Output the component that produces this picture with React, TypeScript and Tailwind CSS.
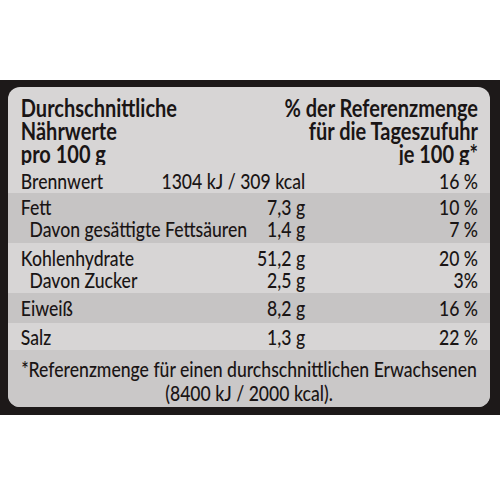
import React from "react";

type Line = { label: string; value: string; pct: string; indent?: boolean };
type Group = { lines: Line[]; bg: string; pad: string };

// Streifen abwechselnd hell / dunkel
const groups: Group[] = [
  {
    bg: "bg-[#d7d5d5]",
    pad: "pt-[5px] pb-[1px]",
    lines: [{ label: "Brennwert", value: "1304 kJ / 309 kcal", pct: "16 %" }],
  },
  {
    bg: "bg-[#c6c4c4]",
    pad: "pt-[3px] pb-[3px]",
    lines: [
      { label: "Fett", value: "7,3 g", pct: "10 %" },
      { label: "Davon gesättigte Fettsäuren", value: "1,4 g", pct: "7 %", indent: true },
    ],
  },
  {
    bg: "bg-[#d7d5d5]",
    pad: "pt-[4px] pb-[2px]",
    lines: [
      { label: "Kohlenhydrate", value: "51,2 g", pct: "20 %" },
      { label: "Davon Zucker", value: "2,5 g", pct: "3%", indent: true },
    ],
  },
  {
    bg: "bg-[#c6c4c4]",
    pad: "pt-[4px] pb-[4px]",
    lines: [{ label: "Eiweiß", value: "8,2 g", pct: "16 %" }],
  },
  {
    bg: "bg-[#d7d5d5]",
    pad: "pt-[3px] pb-[2px]",
    lines: [{ label: "Salz", value: "1,3 g", pct: "22 %" }],
  },
];

export default function App() {
  return (
    <div className="w-[500px] h-[500px] overflow-hidden bg-white text-[#1a1515] font-['Lato',sans-serif]">
      {/* dunkler Rahmen */}
      <div className="mt-[80px] h-[335px] bg-[#1d1919] pl-[8px] pr-[10px] pt-[7px] pb-[8px]">
        <div className="h-full rounded-[12px] bg-[#d7d5d5] overflow-hidden">
          {/* schmale Schrift: Inhalt horizontal gestaucht */}
          <div className="w-[602.5px] h-full flex flex-col origin-top-left scale-x-[0.8] whitespace-nowrap">
            {/* Kopfzeile */}
            <div className="flex justify-between pl-[16px] pr-[15px] pt-[9px] font-bold text-[25px] leading-[23px]">
              <div>
                <div>Durchschnittliche</div>
                <div>Nährwerte</div>
                <div>pro 100 g</div>
              </div>
              <div className="text-right">
                <div>% der Referenzmenge</div>
                <div>für die Tageszufuhr</div>
                <div>je 100 g*</div>
              </div>
            </div>

            {/* Nährwerte */}
            {groups.map((g, i) => (
              <div
                key={i}
                className={`${g.bg} ${g.pad} pl-[16px] pr-[15px] text-[22px] leading-[22px] font-medium`}
              >
                {g.lines.map((l) => (
                  <div key={l.label} className="flex">
                    <div className={l.indent ? "flex-1 pl-[11px]" : "flex-1"}>{l.label}</div>
                    <div className="text-right">{l.value}</div>
                    <div className="w-[216px] text-right">{l.pct}</div>
                  </div>
                ))}
              </div>
            ))}

            {/* Fußnote */}
            <div className="flex-1 bg-[#cac8c8] pt-[7px] px-[15px] text-center text-[22px] leading-[24px] font-medium">
              <div>*Referenzmenge für einen durchschnittlichen Erwachsenen</div>
              <div>(8400 kJ / 2000 kcal).</div>
            </div>
          </div>
        </div>
      </div>
    </div>
  );
}
